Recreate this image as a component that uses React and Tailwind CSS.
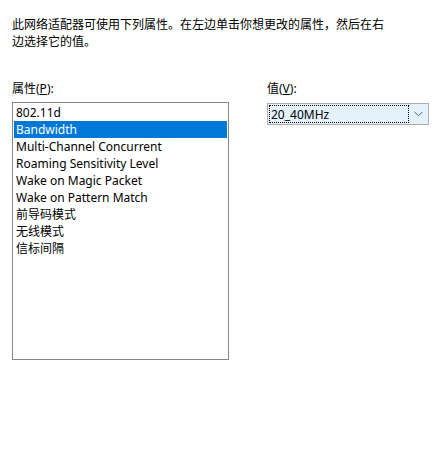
const items = [
  '802.11d',
  'Bandwidth',
  'Multi-Channel Concurrent',
  'Roaming Sensitivity Level',
  'Wake on Magic Packet',
  'Wake on Pattern Match',
  '前导码模式',
  '无线模式',
  '信标间隔',
]

const font = { fontFamily: '"Noto Sans", "Noto Sans CJK SC", sans-serif' }

export default function App() {
  return (
    <div className="w-[441px] h-[463px] bg-white text-[12px] leading-[17px] text-black pl-3 pt-[16px]" style={font}>
      <p className="w-[378px]">
        此网络适配器可使用下列属性。在左边单击你想更改的属性，然后在右边选择它的值。
      </p>

      <div className="flex mt-[30px]">
        {/* property list */}
        <div className="w-[217px]">
          <div>属性(<span className="underline">P</span>):</div>
          <div className="mt-[5px] h-[258px] border border-[#828790] p-px">
            {items.map((it, i) => (
              <div
                key={it}
                className={i === 1 ? 'h-[17px] pl-[2px] bg-[#0078d7] text-white' : 'h-[17px] pl-[2px]'}
              >
                {it}
              </div>
            ))}
          </div>
        </div>

        {/* value combo */}
        <div className="ml-[38px] w-[162px]">
          <div>值(<span className="underline">V</span>):</div>
          <div className="mt-[6px] h-[22px] flex items-stretch border border-[#adadad] bg-[#e5f1fb] p-px">
            <div className="flex-1 flex items-center border border-dotted border-black pl-px">
              20_40MHz
            </div>
            <div className="w-[18px] flex items-center justify-center">
              <svg width="9" height="6" viewBox="0 0 9 6" fill="none" stroke="#606060" strokeWidth="1">
                <path d="M0.5 0.8 L4.5 4.8 L8.5 0.8" />
              </svg>
            </div>
          </div>
        </div>
      </div>
    </div>
  )
}
